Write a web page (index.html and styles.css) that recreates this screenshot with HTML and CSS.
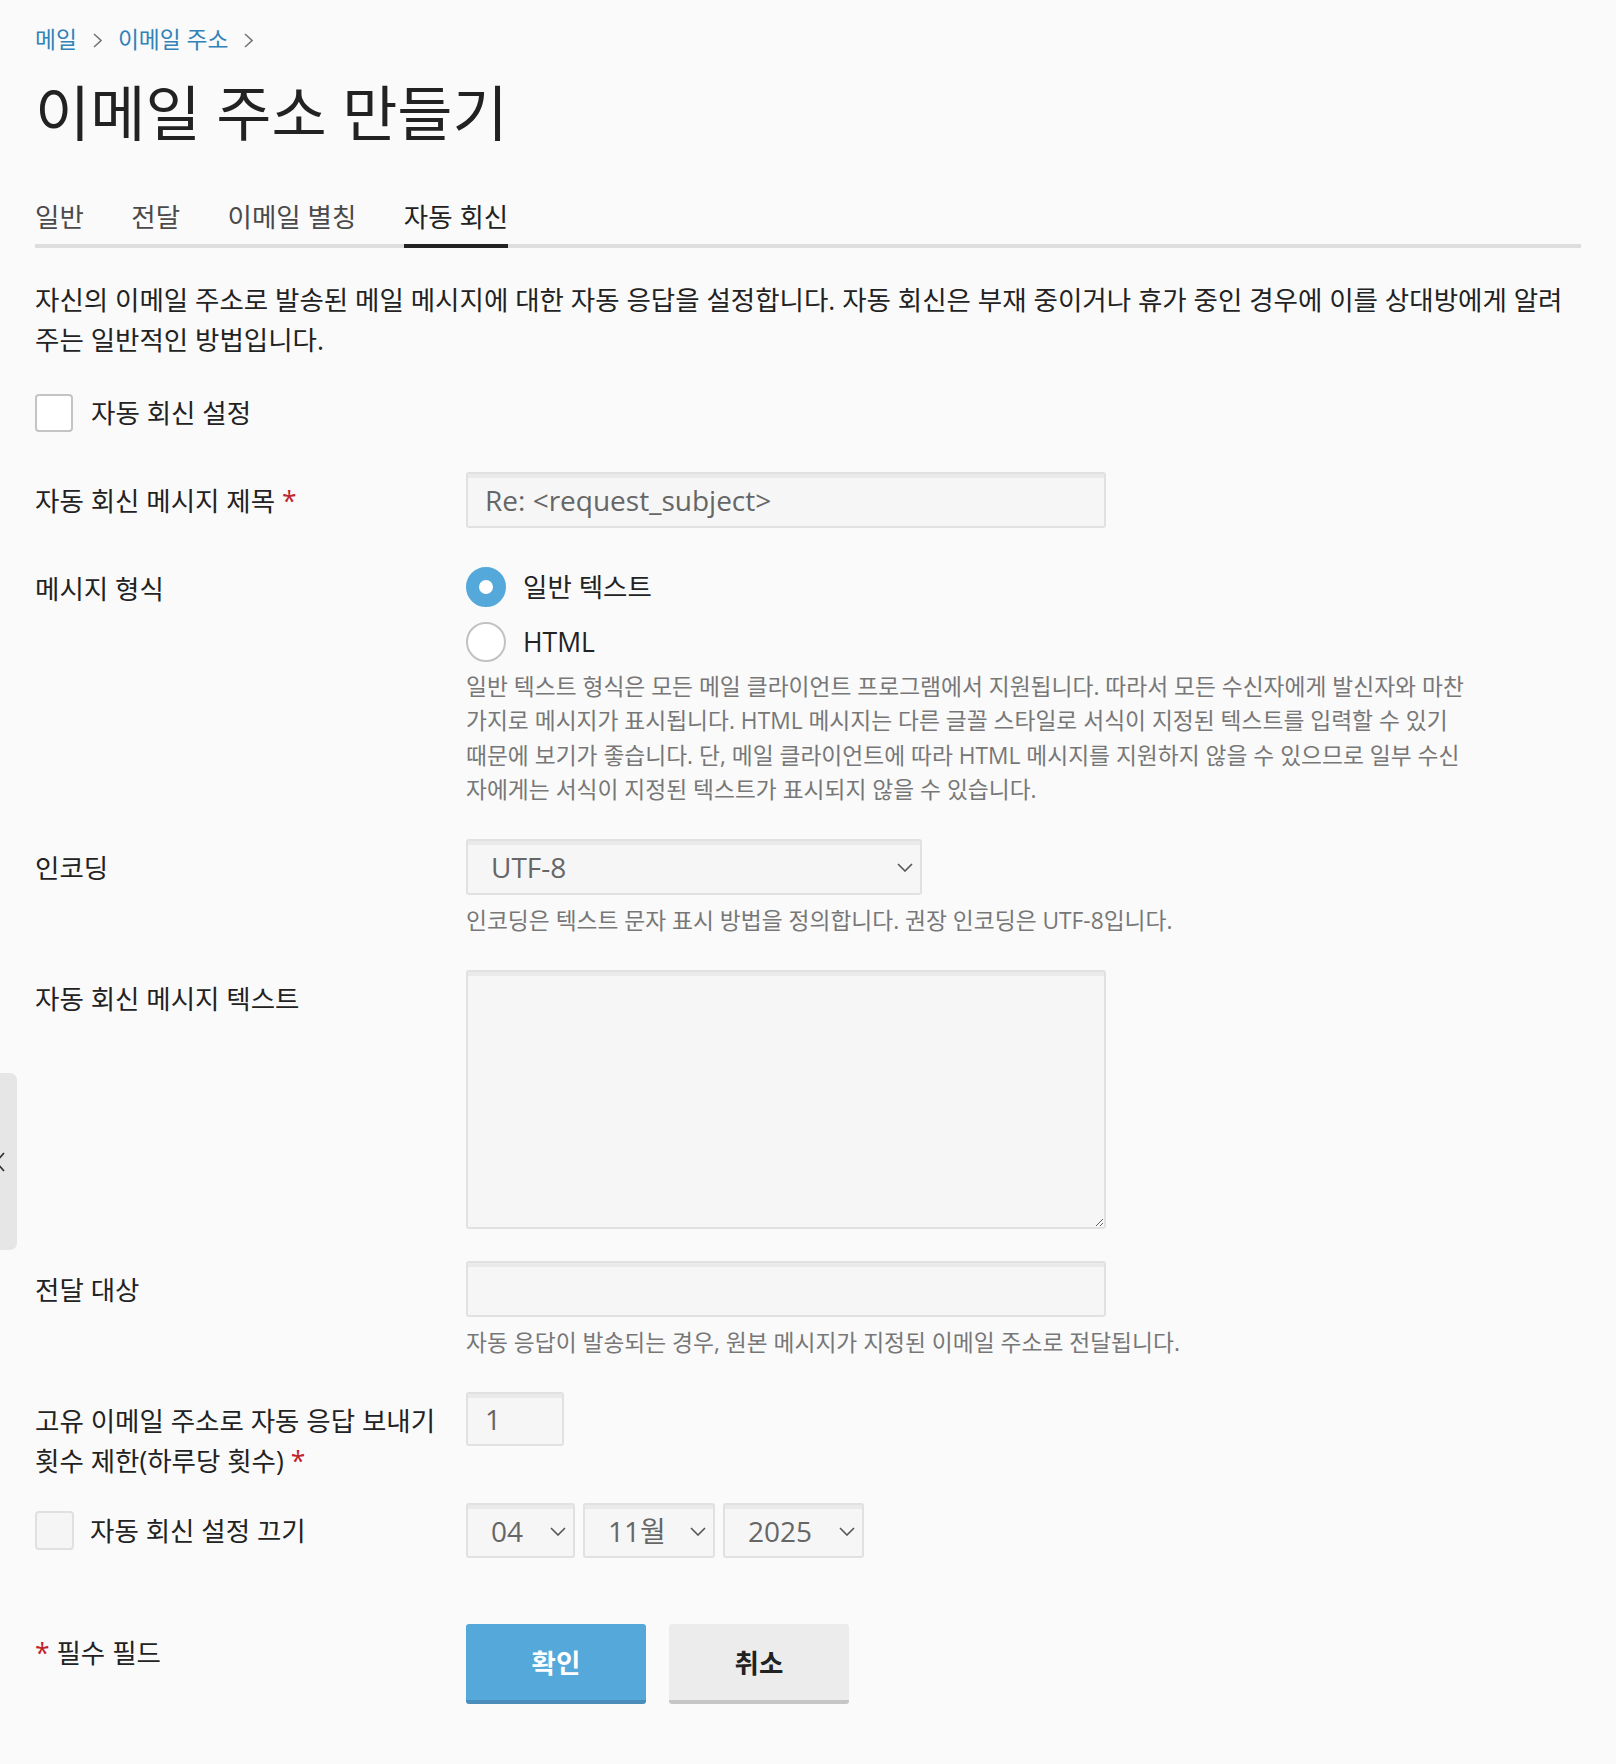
FILE: index.html
```html
<!DOCTYPE html>
<html lang="ko">
<head>
    <meta charset="UTF-8">
    <meta name="viewport" content="width=device-width, initial-scale=1.0">
    <title>이메일 주소 만들기</title>
    <link rel="stylesheet" href="styles.css">
</head>
<body>
    <div class="side-toggle">
        <svg width="12" height="20" viewBox="0 0 12 20"><polyline points="9,1 1,10 9,19"/></svg>
    </div>

    <div class="page">
        <nav class="breadcrumbs">
            <a href="#">메일</a>
            <svg class="crumb-sep" width="9" height="15" viewBox="0 0 9 15"><polyline points="1,1 8,7.5 1,14"/></svg>
            <a href="#">이메일 주소</a>
            <svg class="crumb-sep" width="9" height="15" viewBox="0 0 9 15"><polyline points="1,1 8,7.5 1,14"/></svg>
        </nav>

        <h1>이메일 주소 만들기</h1>

        <ul class="tabs">
            <li><a href="#">일반</a></li>
            <li><a href="#">전달</a></li>
            <li><a href="#">이메일 별칭</a></li>
            <li class="active"><a href="#">자동 회신</a></li>
        </ul>

        <p class="intro">자신의 이메일 주소로 발송된 메일 메시지에 대한 자동 응답을 설정합니다. 자동 회신은 부재 중이거나 휴가 중인 경우에 이를 상대방에게 알려주는 일반적인 방법입니다.</p>

        <label class="check-line"><input type="checkbox" class="checkbox">자동 회신 설정</label>

        <form class="form" onsubmit="return false">
            <div class="form-row">
                <label class="form-label" for="subject">자동 회신 메시지 제목 <span class="required">*</span></label>
                <div class="form-field">
                    <input type="text" id="subject" class="control text-input" value="Re: &lt;request_subject&gt;">
                </div>
            </div>

            <div class="form-row">
                <div class="form-label">메시지 형식</div>
                <div class="form-field">
                    <label class="radio-line"><input type="radio" name="format" class="radio" checked>일반 텍스트</label>
                    <label class="radio-line"><input type="radio" name="format" class="radio">HTML</label>
                    <p class="help">일반 텍스트 형식은 모든 메일 클라이언트 프로그램에서 지원됩니다. 따라서 모든 수신자에게 발신자와 마찬가지로 메시지가 표시됩니다. HTML 메시지는 다른 글꼴 스타일로 서식이 지정된 텍스트를 입력할 수 있기 때문에 보기가 좋습니다. 단, 메일 클라이언트에 따라 HTML 메시지를 지원하지 않을 수 있으므로 일부 수신자에게는 서식이 지정된 텍스트가 표시되지 않을 수 있습니다.</p>
                </div>
            </div>

            <div class="form-row">
                <label class="form-label" for="encoding">인코딩</label>
                <div class="form-field">
                    <div class="select control encoding">
                        <select id="encoding"><option>UTF-8</option></select>
                        <svg class="chevron" width="16" height="9" viewBox="0 0 16 9"><polyline points="1,1 8,8 15,1"/></svg>
                    </div>
                    <p class="help">인코딩은 텍스트 문자 표시 방법을 정의합니다. 권장 인코딩은 UTF-8입니다.</p>
                </div>
            </div>

            <div class="form-row">
                <label class="form-label" for="message">자동 회신 메시지 텍스트</label>
                <div class="form-field">
                    <textarea id="message" class="control text-area"></textarea>
                </div>
            </div>

            <div class="form-row">
                <label class="form-label" for="forward">전달 대상</label>
                <div class="form-field">
                    <input type="text" id="forward" class="control text-input">
                    <p class="help">자동 응답이 발송되는 경우, 원본 메시지가 지정된 이메일 주소로 전달됩니다.</p>
                </div>
            </div>

            <div class="form-row">
                <label class="form-label" for="limit">고유 이메일 주소로 자동 응답 보내기 횟수 제한(하루당 횟수)&nbsp;<span class="required">*</span></label>
                <div class="form-field">
                    <input type="text" id="limit" class="control number-input" value="1">
                </div>
            </div>

            <div class="form-row">
                <label class="form-label check-label"><input type="checkbox" class="checkbox muted">자동 회신 설정 끄기</label>
                <div class="form-field">
                    <div class="date-selects control">
                        <div class="select day">
                            <select><option>04</option></select>
                            <svg class="chevron" width="16" height="9" viewBox="0 0 16 9"><polyline points="1,1 8,8 15,1"/></svg>
                        </div>
                        <div class="select month">
                            <select><option>11월</option></select>
                            <svg class="chevron" width="16" height="9" viewBox="0 0 16 9"><polyline points="1,1 8,8 15,1"/></svg>
                        </div>
                        <div class="select year">
                            <select><option>2025</option></select>
                            <svg class="chevron" width="16" height="9" viewBox="0 0 16 9"><polyline points="1,1 8,8 15,1"/></svg>
                        </div>
                    </div>
                </div>
            </div>

            <div class="form-row form-actions">
                <div class="form-label"><span class="required">*</span> 필수 필드</div>
                <div class="form-field buttons">
                    <button type="submit" class="btn btn-primary">확인</button>
                    <button type="button" class="btn">취소</button>
                </div>
            </div>
        </form>
    </div>
</body>
</html>
```

FILE: styles.css
```css
body {
    margin: 0;
    background-color: #fafafa;
    color: #222;
    font-family: 'Open Sans', 'Noto Sans CJK KR', sans-serif;
    font-size: 26.5px;
    line-height: 40px;
}
.page {
    padding: 25px 35px 40px;
}

/* breadcrumbs */
.breadcrumbs {
    display: flex;
    align-items: center;
    gap: 16px;
    font-size: 22.75px;
    line-height: 30px;
}
.breadcrumbs a {
    color: #3182b8;
    text-decoration: none;
}
.crumb-sep polyline {
    fill: none;
    stroke: #777;
    stroke-width: 1.6;
}
h1 {
    margin: 20px 0 0;
    font-size: 60px;
    line-height: 76px;
    font-weight: 400;
    color: #222;
}

/* tabs */
.tabs {
    display: flex;
    gap: 47.5px;
    list-style: none;
    margin: 49px 0 0;
    padding: 0;
    border-bottom: 4px solid #dedede;
}
.tabs a {
    display: block;
    padding-bottom: 10px;
    line-height: 34px;
    color: #4a4a4a;
    text-decoration: none;
}
.tabs .active {
    margin-bottom: -4px;
    border-bottom: 4px solid #222;
}
.tabs .active a {
    color: #222;
}

.intro {
    margin: 32px 0 0;
}

/* checkbox & radio */
.checkbox {
    -webkit-appearance: none;
    appearance: none;
    flex: none;
    width: 38px;
    height: 38px;
    margin: 0;
    border: 2px solid #c4c4c4;
    border-radius: 4px;
    background-color: #fff;
}
.checkbox.muted {
    width: 39px;
    height: 39px;
    border-color: #e0e0e0;
    background-color: #f5f5f5;
}
.check-line {
    display: flex;
    align-items: center;
    gap: 18px;
    margin-top: 33px;
}
.radio {
    -webkit-appearance: none;
    appearance: none;
    flex: none;
    box-sizing: border-box;
    width: 40px;
    height: 40px;
    margin: 0;
    border: 2px solid #c2c2c2;
    border-radius: 50%;
    background-color: #fff;
}
.radio:checked {
    border: 13px solid #55a8da;
}
.radio-line {
    display: flex;
    align-items: center;
    gap: 17px;
    height: 55px;
}

/* form */
.form {
    margin-top: 39px;
}
.form-row {
    display: grid;
    grid-template-columns: 431px 1fr;
    margin-bottom: 22.5px;
}
.form-label {
    padding: 9px 16px 0 0;
}
.required {
    color: #c0232e;
}
.control {
    display: block;
    margin-bottom: 9px;
}
.help {
    max-width: 1003px;
    margin: 1px 0 9px;
    font-size: 22.75px;
    line-height: 34.5px;
    color: #777;
}
.radio-line + .help {
    margin-top: 0;
}
.text-input,
.number-input,
.text-area,
.select select {
    box-sizing: border-box;
    height: 56px;
    border: 2px solid #e1e1e1;
    border-radius: 3px;
    background-color: #f6f6f6;
    box-shadow: inset 0 4px 0 #eaeaea;
    color: #666;
    font-family: 'Open Sans', 'Noto Sans CJK KR', sans-serif;
    font-size: 28px;
    outline: none;
}
.text-input {
    width: 640px;
    padding: 0 17px;
}
.number-input {
    width: 98px;
    height: 54px;
    padding: 0 17px;
}
.text-area {
    width: 640px;
    height: 259px;
    padding: 12px 17px;
    resize: both;
}
.select {
    position: relative;
}
.select select {
    -webkit-appearance: none;
    appearance: none;
    display: block;
    width: 100%;
    padding: 0 36px 0 23px;
}
.chevron {
    position: absolute;
    right: 9px;
    top: 50%;
    margin-top: -4px;
    pointer-events: none;
}
.chevron polyline {
    fill: none;
    stroke: #555;
    stroke-width: 1.6;
}
.encoding {
    width: 456px;
}
.date-selects {
    display: flex;
    gap: 8px;
}
.date-selects select {
    height: 55px;
}
.day { width: 109px; }
.month { width: 132px; }
.year { width: 141px; }
.check-label {
    display: flex;
    align-items: center;
    gap: 16px;
    height: 55px;
    padding-top: 0;
}

/* buttons */
.form-actions {
    margin-top: 56.5px;
}
.buttons {
    display: flex;
    gap: 23px;
}
.btn {
    box-sizing: border-box;
    width: 180px;
    height: 80px;
    border: none;
    border-bottom: 4px solid #c6c6c6;
    border-radius: 3px;
    background-color: #ececec;
    color: #222;
    font-family: 'Open Sans', 'Noto Sans CJK KR', sans-serif;
    font-size: 26.5px;
    font-weight: bold;
    cursor: pointer;
}
.btn-primary {
    background-color: #55a8da;
    border-bottom-color: #4a8dba;
    color: #fff;
}

/* collapsed side panel handle */
.side-toggle {
    position: fixed;
    left: 0;
    top: 1073px;
    width: 17px;
    height: 177px;
    border-radius: 0 7px 7px 0;
    background-color: #e6e6e6;
    overflow: hidden;
}
.side-toggle svg {
    position: absolute;
    left: -5px;
    top: 79px;
}
.side-toggle polyline {
    fill: none;
    stroke: #333;
    stroke-width: 1.8;
}
```
